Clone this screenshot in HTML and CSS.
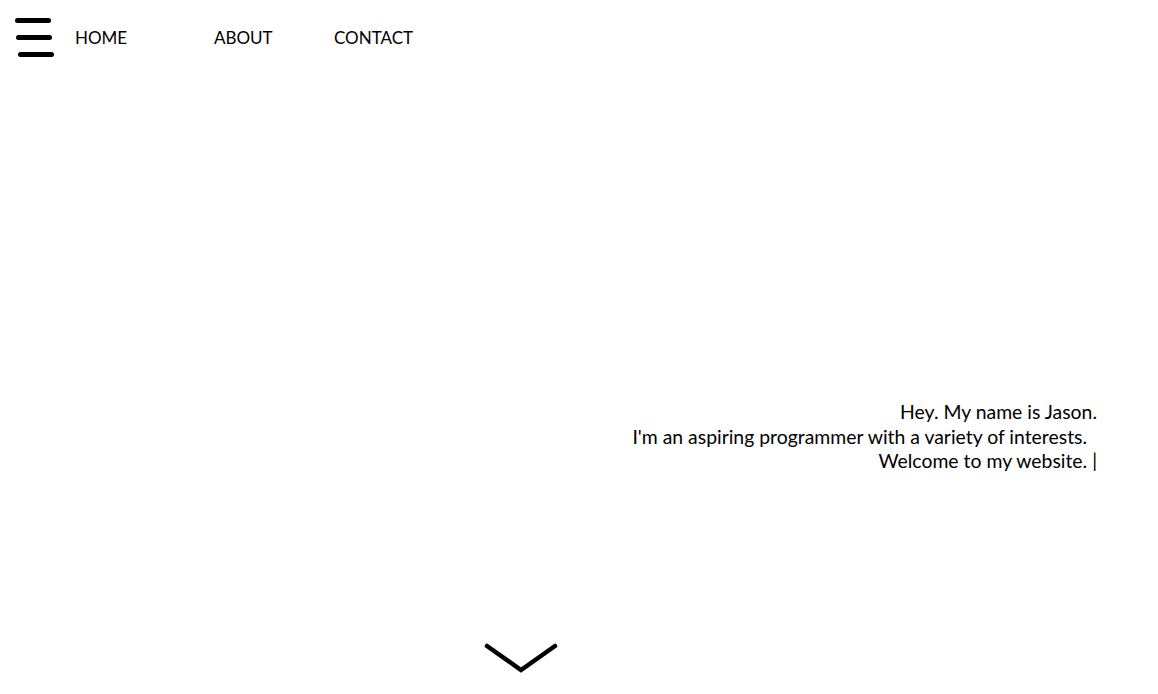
FILE: index.html
```html
<!DOCTYPE html>
<html>
<head>
<meta charset="utf-8">
<link rel="stylesheet" href="styles.css">
</head>
<body>
<header class="top">
  <div class="burger">
    <span class="bar b1"></span>
    <span class="bar b2"></span>
    <span class="bar b3"></span>
  </div>
  <nav class="nav">
    <a class="nav-link home">HOME</a>
    <a class="nav-link about">ABOUT</a>
    <a class="nav-link contact">CONTACT</a>
  </nav>
</header>
<main class="hero">
  <div class="intro">
    <p class="line">Hey. My name is Jason.</p>
    <p class="line">I'm an aspiring programmer with a variety of interests.&nbsp;&nbsp;</p>
    <p class="line">Welcome to my website. |</p>
  </div>
</main>
<div class="down">
  <svg class="chev" width="74" height="32" viewBox="0 0 74 32">
    <polyline points="3,4 37,28 71,4" fill="none" stroke="#000" stroke-width="4.5" stroke-linejoin="miter" stroke-linecap="round"/>
  </svg>
</div>
</body>
</html>
```
FILE: styles.css
```css
html, body {
  margin: 0;
  padding: 0;
  background: #fff;
}
body {
  width: 1158px;
  height: 694px;
  overflow: hidden;
  font-family: Lato, "Open Sans", sans-serif;
  color: #000;
  display: flex;
  flex-direction: column;
}
.top {
  display: flex;
  align-items: center;
  height: 74px;
  padding-left: 15px;
}
.burger {
  display: flex;
  flex-direction: column;
  gap: 12px;
  width: 40px;
}
.bar {
  display: block;
  height: 5px;
  width: 36px;
  background: #000;
  border-radius: 3px;
}
.b2 { margin-left: 1px; }
.b3 { margin-left: 3px; }
.nav {
  display: flex;
  margin-left: 20px;
}
.nav-link {
  font-size: 17px;
  color: #000;
  text-decoration: none;
}
.home { width: 139px; }
.about { width: 120px; }
.hero {
  flex: 1;
  display: flex;
  justify-content: flex-end;
  align-items: flex-start;
  padding-right: 61px;
  padding-top: 326px;
}
.intro {
  text-align: right;
}
.line {
  margin: 0;
  font-size: 19.4px;
  line-height: 24.5px;
}
.down {
  display: flex;
  justify-content: flex-start;
  padding-left: 484px;
  height: 52px;
  align-items: flex-start;
}
.chev {
  display: block;
}
```
